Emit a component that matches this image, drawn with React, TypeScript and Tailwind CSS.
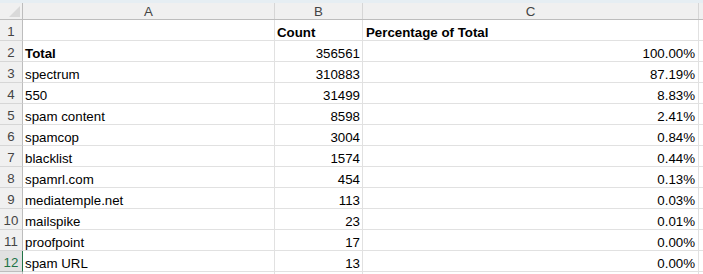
const rows: { name: string; count: string; pct: string; bold?: boolean }[] = [
  { name: '', count: 'Count', pct: 'Percentage of Total', bold: true },
  { name: 'Total', count: '356561', pct: '100.00%', bold: true },
  { name: 'spectrum', count: '310883', pct: '87.19%' },
  { name: '550', count: '31499', pct: '8.83%' },
  { name: 'spam content', count: '8598', pct: '2.41%' },
  { name: 'spamcop', count: '3004', pct: '0.84%' },
  { name: 'blacklist', count: '1574', pct: '0.44%' },
  { name: 'spamrl.com', count: '454', pct: '0.13%' },
  { name: 'mediatemple.net', count: '113', pct: '0.03%' },
  { name: 'mailspike', count: '23', pct: '0.01%' },
  { name: 'proofpoint', count: '17', pct: '0.00%' },
  { name: 'spam URL', count: '13', pct: '0.00%' },
]

export default function App() {
  return (
    <div className="w-[703px] h-[274px] overflow-hidden bg-white text-[13.3px] text-[#000] font-['Liberation_Sans',Arial,sans-serif]">
      {/* ribbon edge */}
      <div className="h-[3px] bg-[#e6eef3]" />

      {/* column headers */}
      <div className="flex h-[17px] bg-[#f0f0f0] border-b border-[#bdbdbd] text-[#444]">
        <div className="relative w-[23px] shrink-0 border-r border-[#bdbdbd]">
          <svg className="absolute left-[9px] top-[3px]" width="11" height="11" viewBox="0 0 11 11">
            <polygon points="11,0 11,11 0,11" fill="#d9d9d9" />
          </svg>
        </div>
        <div className="w-[252px] shrink-0 border-r border-[#d6d6d6] flex items-center justify-center leading-[15px]">A</div>
        <div className="w-[88px] shrink-0 border-r border-[#d6d6d6] flex items-center justify-center leading-[15px]">B</div>
        <div className="w-[336px] shrink-0 border-r border-[#d6d6d6] flex items-center justify-center leading-[15px]">C</div>
        <div className="flex-1" />
      </div>

      {rows.map((r, i) => {
        const selected = i === rows.length - 1
        return (
          <div key={i} className="flex h-[21px] border-b border-[#e1e1e1]">
            <div
              className={
                selected
                  ? 'w-[23px] shrink-0 bg-[#e1e1e1] border-r border-[#217346] text-[#217346] flex items-end justify-center leading-[15px] pb-[1px] border-b border-b-[#bdbdbd] -mb-px'
                  : 'w-[23px] shrink-0 bg-[#f0f0f0] border-r border-[#bdbdbd] text-[#444] flex items-end justify-center leading-[15px] pb-[1px] border-b border-b-[#d6d6d6] -mb-px'
              }
            >
              {i + 1}
            </div>
            <div className={`w-[252px] shrink-0 border-r border-[#e1e1e1] flex items-end px-[2px] leading-[15px] ${r.bold ? 'font-bold' : ''}`}>
              {r.name}
            </div>
            <div
              className={`w-[88px] shrink-0 border-r border-[#e1e1e1] flex items-end px-[2px] leading-[15px] ${
                i === 0 ? 'justify-start font-bold' : 'justify-end'
              }`}
            >
              {r.count}
            </div>
            <div
              className={`w-[336px] shrink-0 border-r border-[#e1e1e1] flex items-end px-[3px] leading-[15px] ${
                i === 0 ? 'justify-start font-bold' : 'justify-end'
              }`}
            >
              {r.pct}
            </div>
            <div className="flex-1" />
          </div>
        )
      })}

      {/* partial row 13 */}
      <div className="flex h-[10px]">
        <div className="w-[23px] shrink-0 bg-[#f0f0f0] border-r border-[#bdbdbd]" />
        <div className="w-[252px] shrink-0 border-r border-[#e1e1e1]" />
        <div className="w-[88px] shrink-0 border-r border-[#e1e1e1]" />
        <div className="w-[336px] shrink-0 border-r border-[#e1e1e1]" />
      </div>
    </div>
  )
}
